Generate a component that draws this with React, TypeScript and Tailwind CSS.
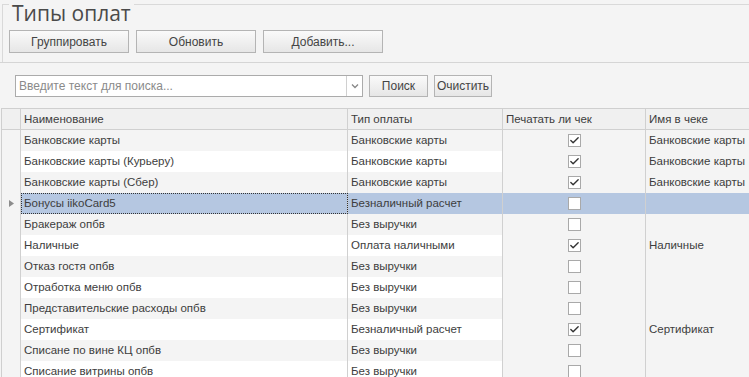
import { Check } from "lucide-react"

type Row = { name: string; type: string; print: boolean; receipt: string }

const rows: Row[] = [
  { name: "Банковские карты", type: "Банковские карты", print: true, receipt: "Банковские карты" },
  { name: "Банковские карты (Курьеру)", type: "Банковские карты", print: true, receipt: "Банковские карты" },
  { name: "Банковские карты (Сбер)", type: "Банковские карты", print: true, receipt: "Банковские карты" },
  { name: "Бонусы iikoCard5", type: "Безналичный расчет", print: false, receipt: "" },
  { name: "Бракераж опбв", type: "Без выручки", print: false, receipt: "" },
  { name: "Наличные", type: "Оплата наличными", print: true, receipt: "Наличные" },
  { name: "Отказ гостя опбв", type: "Без выручки", print: false, receipt: "" },
  { name: "Отработка меню опбв", type: "Без выручки", print: false, receipt: "" },
  { name: "Представительские расходы опбв", type: "Без выручки", print: false, receipt: "" },
  { name: "Сертификат", type: "Безналичный расчет", print: true, receipt: "Сертификат" },
  { name: "Списане по вине КЦ опбв", type: "Без выручки", print: false, receipt: "" },
  { name: "Списание витрины опбв", type: "Без выручки", print: false, receipt: "" },
]

const SELECTED = 3

const btn =
  "h-[23px] border border-[#b4b4b4] bg-gradient-to-b from-[#fafafa] to-[#e6e6e6] text-[#444] text-[12px] flex items-center justify-center"

const CheckBox = ({ on }: { on: boolean }) => (
  <div className="w-[13px] h-[13px] border border-[#a9a9a9] bg-white flex items-center justify-center">
    {on && <Check className="w-[11px] h-[11px] text-[#333]" strokeWidth={3} />}
  </div>
)

export default function App() {
  return (
    <div
      className="w-[749px] h-[377px] overflow-hidden bg-[#f4f4f4] text-[#3d3d3d]"
      style={{ fontFamily: "'Liberation Sans', Arial, sans-serif" }}
    >
      {/* title + toolbar */}
      <div className="pt-[4px] pl-[2px]">
        <div className="border-t border-l border-[#d9d9d9] h-[58px]">
          <div className="flex items-start">
            <div
              className="-mt-[4px] ml-[6px] px-[3px] bg-[#f4f4f4] text-[21px] leading-[24px] text-[#4a4a4a]"
              style={{ fontFamily: "'Open Sans', sans-serif" }}
            >
              Типы оплат
            </div>
          </div>
          <div className="flex gap-[7px] pl-[6px] mt-[5px]">
            <button className={`${btn} w-[120px]`}>Группировать</button>
            <button className={`${btn} w-[120px]`}>Обновить</button>
            <button className={`${btn} w-[120px]`}>Добавить...</button>
          </div>
        </div>
      </div>
      <div className="border-t border-[#d5d5d5]" />

      {/* search */}
      <div className="flex items-center gap-[6px] pl-[15px] pt-[12px] pb-[11px]">
        <div className="w-[348px] h-[22px] bg-white border border-[#ababab] flex">
          <div className="flex-1 pl-[3px] text-[12px] leading-[20px] text-[#8a8a8a]">
            Введите текст для поиска...
          </div>
          <div className="w-[16px] border-l border-[#d0d0d0] flex items-center justify-center">
            <svg width="8" height="6" viewBox="0 0 8 6">
              <path d="M1 1.5 L4 4.5 L7 1.5" fill="none" stroke="#888" strokeWidth="1.3" />
            </svg>
          </div>
        </div>
        <button className={`${btn} w-[59px] !h-[22px]`}>Поиск</button>
        <button className={`${btn} w-[58px] !h-[22px]`}>Очистить</button>
      </div>

      {/* grid */}
      <div className="border-t border-l border-[#cfcfcf] ml-[1px] text-[11.5px]">
        <div className="grid grid-cols-[19px_327px_155px_143px_1fr] h-[21px] border-b border-[#d0d0d0] bg-[#f0f0f0]">
          <div className="border-r border-[#d0d0d0]" />
          <div className="border-r border-[#d0d0d0] pl-[3px] leading-[20px]">Наименование</div>
          <div className="border-r border-[#d0d0d0] pl-[3px] leading-[20px]">Тип оплаты</div>
          <div className="border-r border-[#d0d0d0] pl-[3px] leading-[20px]">Печатать ли чек</div>
          <div className="pl-[3px] leading-[20px]">Имя в чеке</div>
        </div>
        {rows.map((r, i) => {
          const sel = i === SELECTED
          const stripe = i % 2 === 0 ? "bg-[#f4f4f4]" : "bg-white"
          const main = sel ? "bg-[#b5c7e1]" : stripe
          const side = sel ? "bg-[#b5c7e1]" : "bg-[#f4f4f4]"
          return (
            <div key={r.name} className="grid grid-cols-[19px_327px_155px_143px_1fr] h-[21px] leading-[21px]">
              <div className="border-r border-[#d0d0d0] bg-[#f4f4f4] flex items-center justify-center">
                {sel && (
                  <svg width="5" height="7" viewBox="0 0 5 7">
                    <path d="M0 0 L5 3.5 L0 7 Z" fill="#8c8c8c" />
                  </svg>
                )}
              </div>
              <div
                className={`border-r border-[#d0d0d0] pl-[3px] ${main} ${
                  sel ? "outline outline-1 outline-dotted outline-[#333] -outline-offset-1" : ""
                }`}
              >
                {r.name}
              </div>
              <div className={`border-r border-[#d0d0d0] pl-[3px] ${main}`}>{r.type}</div>
              <div className={`border-r border-[#d0d0d0] ${side} flex items-center justify-center`}>
                <CheckBox on={r.print} />
              </div>
              <div className={`pl-[3px] whitespace-nowrap ${side}`}>{r.receipt}</div>
            </div>
          )
        })}
      </div>
    </div>
  )
}
